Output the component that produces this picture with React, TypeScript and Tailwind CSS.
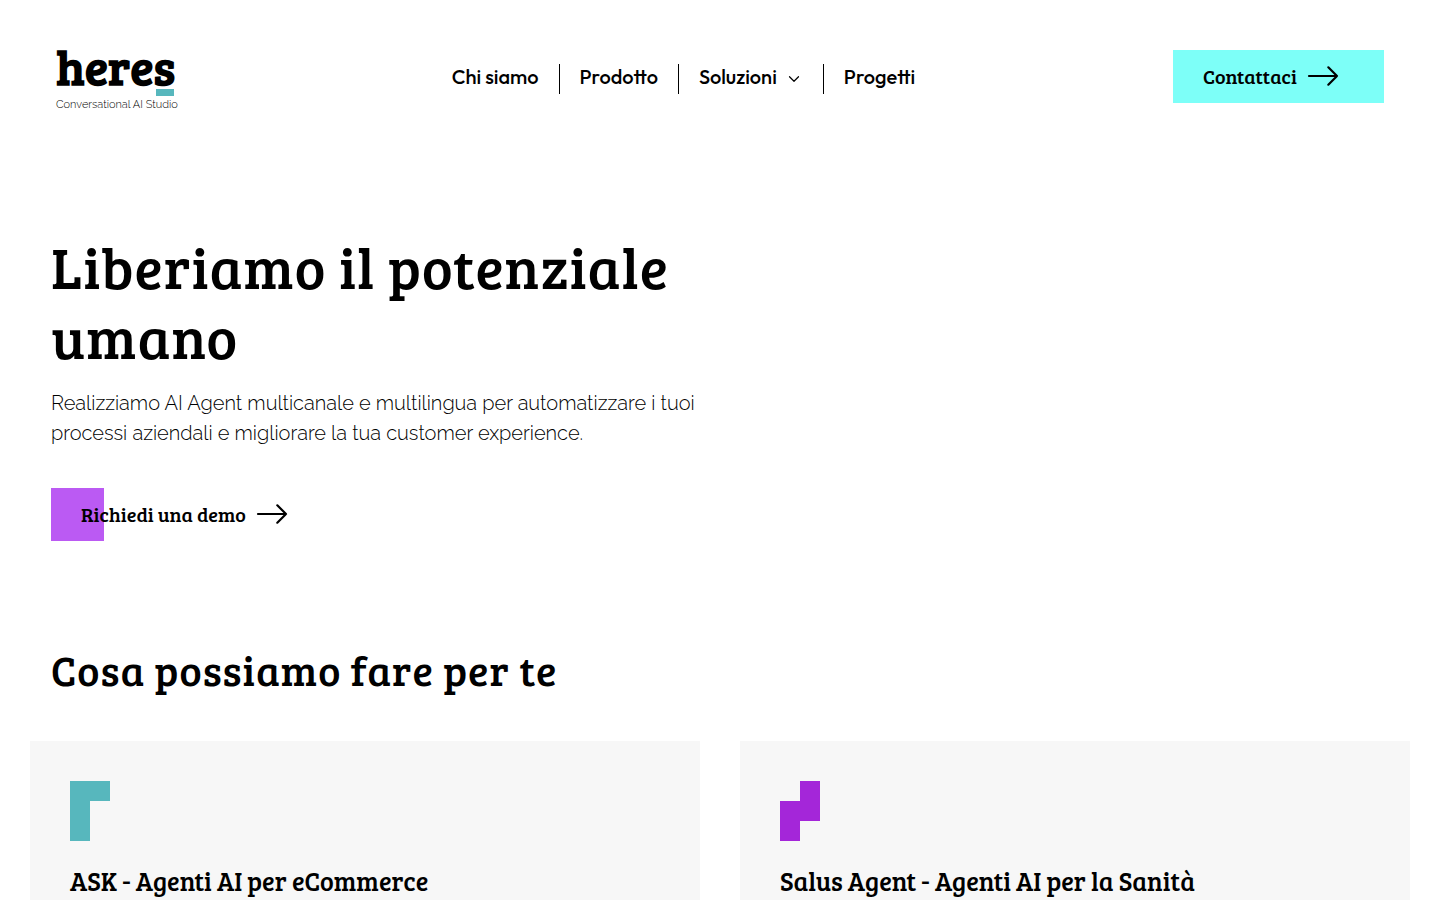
import React from "react";
import { ChevronDown } from "lucide-react";

const cards = [
  { title: "ASK - Agenti AI per eCommerce", color: "#57b7bd", shape: "M0 0H40V20H20V60H0Z" },
  { title: "Salus Agent - Agenti AI per la Sanità", color: "#a426d9", shape: "M20 0H40V40H20V60H0V20H20Z" },
];

function Arrow() {
  return (
    <svg className="w-8 h-6 shrink-0" viewBox="0 0 32 24" fill="none" stroke="currentColor" strokeWidth="2.2" strokeLinecap="round" strokeLinejoin="round">
      <path d="M2 12H30M21.3 3.3L30 12L21.3 20.7" />
    </svg>
  );
}

function Logo() {
  return (
    <a href="#" className="flex flex-col w-[118px] text-black">
      <span className="mb-[7px] font-['Bree_Serif','DejaVu_Serif',serif] font-bold text-[48px] leading-[32px]">heres</span>
      <span className="self-end w-[18px] h-[7px] bg-[#57b7bd]" />
      <span className="mt-[3px] font-['Raleway','Lato',sans-serif] text-[11px] leading-[12px] font-light whitespace-nowrap">Conversational AI Studio</span>
    </a>
  );
}

export default function HomePage() {
  return (
    <div className="min-h-screen w-full bg-white text-black">
      {/* Header */}
      <header className="flex items-start justify-between px-14 pt-[50px]">
        <Logo />

        <nav className="flex items-stretch ml-5 pt-3.5 font-['Outfit','Lato',sans-serif] font-medium text-[20px] leading-[26px]">
          <a href="#chi-siamo" className="pr-5 pb-1 border-r border-black">Chi siamo</a>
          <a href="#prodotto" className="px-5 pb-1 border-r border-black">Prodotto</a>
          <button type="button" className="flex items-center gap-2 px-5 pb-1 border-r border-black">
            Soluzioni <ChevronDown className="w-[18px] h-[18px] mt-1" strokeWidth={1.6} />
          </button>
          <a href="#progetti" className="pl-5 pb-1">Progetti</a>
        </nav>

        <a href="#contattaci" className="flex items-center gap-2.5 w-[211px] h-[53px] px-[30px] pb-0.5 bg-[#7dfff8] font-['Bree_Serif','DejaVu_Serif',serif] text-[20px] whitespace-nowrap">
          Contattaci
          <Arrow />
        </a>
      </header>

      {/* Hero */}
      <section className="px-[51px] pt-[120px]">
        <div className="max-w-[660px]">
          <h1 className="font-['Bree_Serif','DejaVu_Serif',serif] text-[58px] leading-[70px] tracking-[1px]">
            Liberiamo il potenziale umano
          </h1>
          <p className="mt-[17px] font-['Raleway','Lato',sans-serif] font-light text-[20px] leading-[30px]">
            Realizziamo AI Agent multicanale e multilingua per automatizzare i tuoi processi aziendali e migliorare la tua customer experience.
          </p>
          <a href="#demo" className="flex items-center gap-2.5 w-fit h-[53px] mt-10 pl-[30px] pb-0.5 bg-linear-to-r from-[#bb5af3] from-[53px] to-transparent to-[53px] font-['Bree_Serif','DejaVu_Serif',serif] text-[20px] whitespace-nowrap">
            Richiedi una demo
            <Arrow />
          </a>
        </div>
      </section>

      {/* Services */}
      <section className="px-[30px] pt-[99px]">
        <h2 className="px-[21px] font-['Bree_Serif','DejaVu_Serif',serif] text-[42px] leading-[60px] tracking-[1px]">
          Cosa possiamo fare per te
        </h2>
        <div className="grid grid-cols-2 gap-10 mt-[41px]">
          {cards.map((card) => (
            <article key={card.title} className="p-10 bg-[#f7f7f7]">
              <svg className="w-10 h-[60px]" viewBox="0 0 40 60" fill={card.color}>
                <path d={card.shape} />
              </svg>
              <h3 className="mt-6 font-['Bree_Serif','DejaVu_Serif',serif] text-[26px] leading-[32px]">
                {card.title}
              </h3>
            </article>
          ))}
        </div>
      </section>
    </div>
  );
}
